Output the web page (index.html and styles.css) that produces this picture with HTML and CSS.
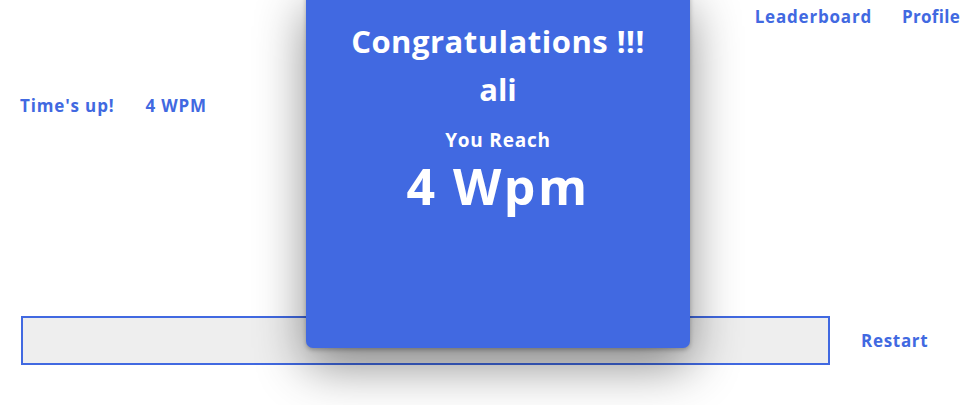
FILE: index.html
```html
<!DOCTYPE html>
<html>
<head>
<meta charset="utf-8">
<link rel="stylesheet" href="styles.css">
</head>
<body>
<nav class="nav">
  <a class="nav-link">Leaderboard</a>
  <a class="nav-link">Profile</a>
</nav>
<div class="status">
  <span>Time's up!</span>
  <span>4 WPM</span>
</div>
<div class="typing-row">
  <div class="typing-box"></div>
  <a class="restart">Restart</a>
</div>
<div class="modal">
  <h1 class="modal-title">Congratulations !!!</h1>
  <h2 class="modal-name">ali</h2>
  <p class="modal-sub">You Reach</p>
  <p class="modal-wpm">4 Wpm</p>
</div>
</body>
</html>
```
FILE: styles.css
```css
html, body {
  margin: 0;
  padding: 0;
  background: #fff;
}
body {
  width: 980px;
  height: 405px;
  overflow: hidden;
  position: relative;
  font-family: "Open Sans", "DejaVu Sans", sans-serif;
  font-weight: 700;
  color: #4169e1;
}
.nav {
  display: flex;
  justify-content: flex-end;
  gap: 30px;
  padding: 6px 20px 0 0;
  height: 25px;
}
.nav-link {
  font-size: 17px;
  line-height: 22px;
  letter-spacing: 0.8px;
}
.nav-link:last-child {
  letter-spacing: 0.3px;
}
.status {
  display: flex;
  gap: 31px;
  padding: 64px 0 0 20px;
  font-size: 17px;
  line-height: 22px;
  letter-spacing: 0.85px;
}
.typing-row {
  display: flex;
  align-items: center;
  gap: 31px;
  padding: 199px 0 0 21px;
}
.typing-box {
  width: 805px;
  height: 45px;
  border: 2px solid #4169e1;
  background: #eeeeee;
}
.restart {
  font-size: 17px;
  line-height: 22px;
  letter-spacing: 0.7px;
}
.modal {
  position: absolute;
  left: 306px;
  top: -10px;
  width: 384px;
  height: 358px;
  background: #4169e1;
  border-radius: 7px;
  box-shadow: 0 18px 50px rgba(0, 0, 0, 0.45), 0 2px 4px rgba(0, 0, 0, 0.25);
  color: #fff;
  text-align: center;
}
.modal-title {
  margin: 31px 0 0;
  font-size: 31px;
  line-height: 40px;
  letter-spacing: 0.5px;
}
.modal-name {
  margin: 8px 0 0;
  font-size: 31px;
  line-height: 40px;
}
.modal-sub {
  margin: 20px 0 0;
  font-size: 19px;
  line-height: 22px;
  letter-spacing: 0.8px;
}
.modal-wpm {
  margin: 9px 0 0;
  font-size: 50px;
  line-height: 52px;
  letter-spacing: 2.5px;
}
```
